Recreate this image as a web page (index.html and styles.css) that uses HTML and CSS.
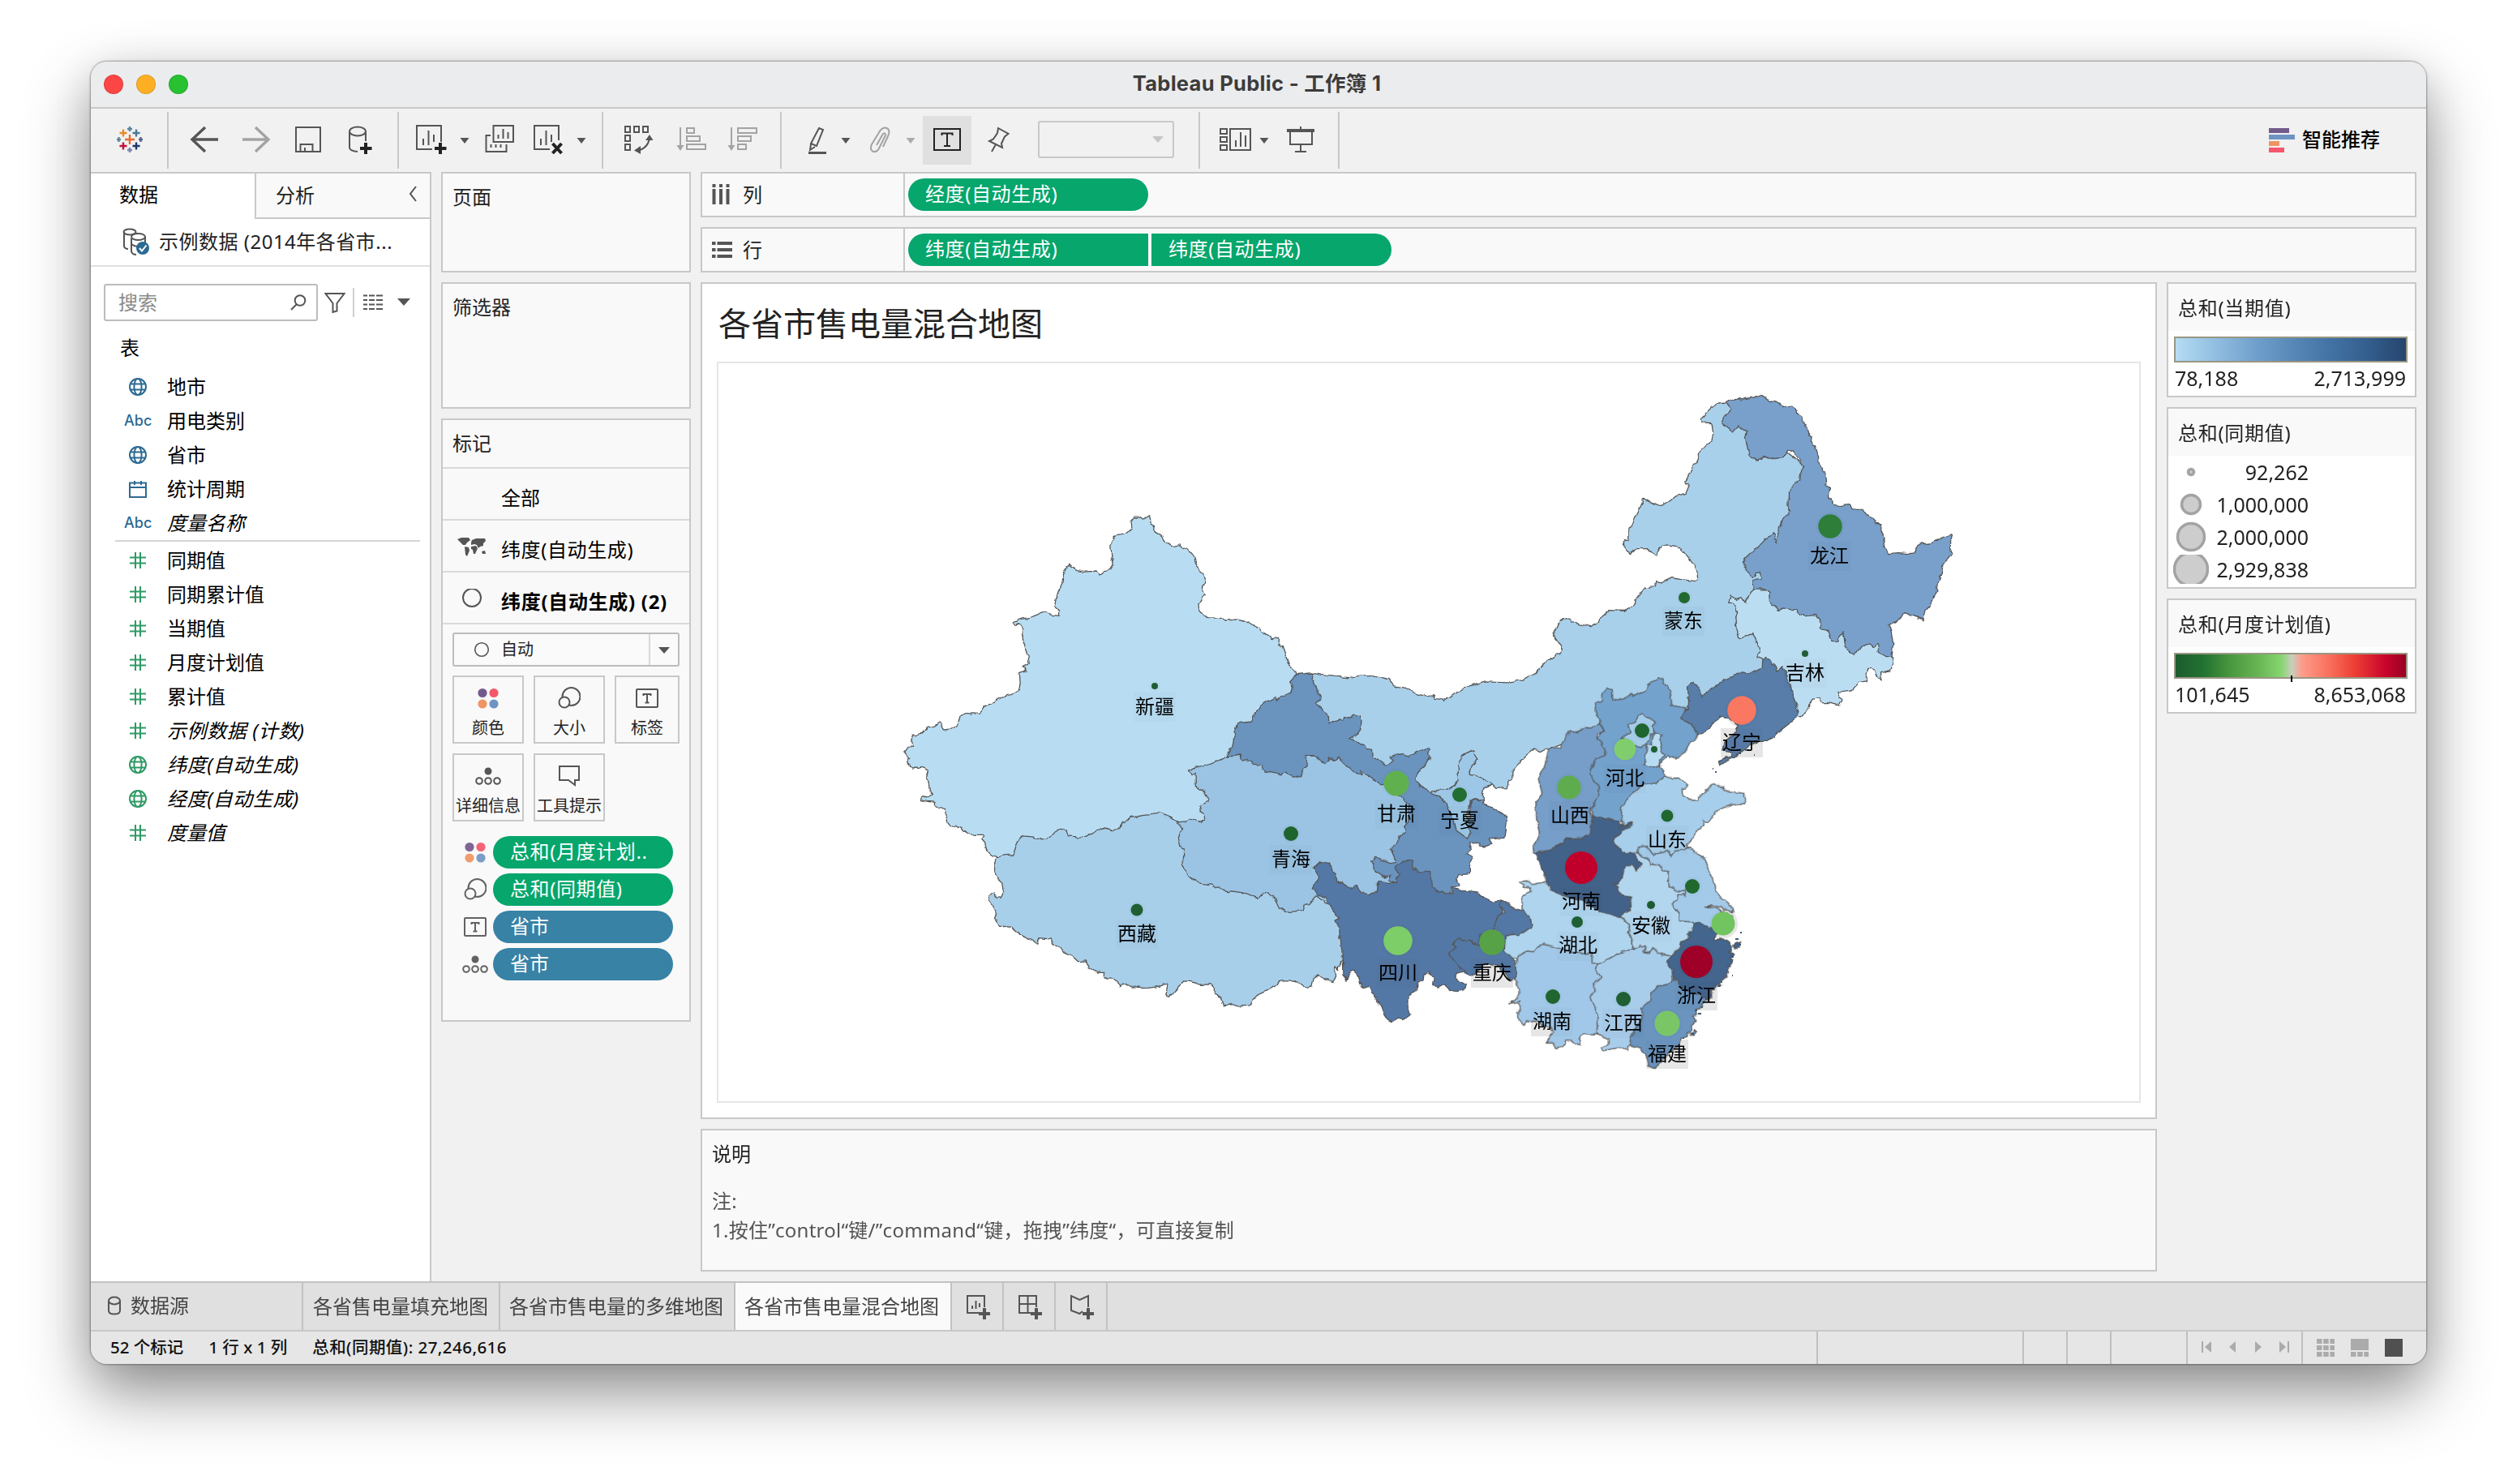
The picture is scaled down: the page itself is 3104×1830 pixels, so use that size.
FILE: index.html
```html
<!DOCTYPE html>
<html lang="zh-CN">
<head>
<meta charset="utf-8">
<title>Tableau Public - 工作簿 1</title>
<link rel="stylesheet" href="styles.css">
</head>
<body>
<svg class="defs" width="0" height="0">
  <defs>
    <symbol id="globe" viewBox="0 0 24 24"><circle cx="12" cy="12" r="10"/><ellipse cx="12" cy="12" rx="4.6" ry="10"/><path d="M3 8.5H21M3 15.5H21"/></symbol>
    <symbol id="hash" viewBox="0 0 24 24"><path d="M9 2V22M15 2V22M2 8.5H22M2 15.5H22"/></symbol>
    <symbol id="cal" viewBox="0 0 24 24"><path d="M2 4.5H22V22H2ZM2 10H22M8 2V7M16 2V7"/></symbol>
    <symbol id="dots" viewBox="0 0 28 28"><g stroke="none"><circle cx="7" cy="7.500" r="5.600" fill="#735a8c"/><circle cx="21" cy="7.500" r="5.600" fill="#f5566c"/><circle cx="7" cy="21" r="5.600" fill="#ee9563"/><circle cx="21" cy="21" r="5.600" fill="#6f94c2"/></g></symbol>
    <symbol id="size" viewBox="0 0 28 28"><circle cx="16.500" cy="12" r="11"/><circle cx="8" cy="19" r="6.500" fill="#f9f9f9"/></symbol>
    <symbol id="label" viewBox="0 0 28 28"><rect x="1" y="3" width="26" height="22" rx="1"/><path d="M9.500 11V9H18.500V11M14 9V19.500M11.500 19.500H16.500"/></symbol>
    <symbol id="detail" viewBox="0 0 32 28"><circle cx="16" cy="8" r="4.500" fill="#555" stroke="none"/><circle cx="5" cy="20" r="3.800"/><circle cx="16" cy="20" r="3.800"/><circle cx="27" cy="20" r="3.800"/></symbol>
    <symbol id="tip" viewBox="0 0 28 28"><path d="M2 2H26V19H21V25L13 19H2Z"/></symbol>
    <filter id="coast" x="-2%" y="-2%" width="104%" height="104%" color-interpolation-filters="sRGB">
      <feTurbulence type="fractalNoise" baseFrequency="0.11" numOctaves="2" seed="4" result="n"/>
      <feDisplacementMap in="SourceGraphic" in2="n" scale="6" xChannelSelector="R" yChannelSelector="G"/>
    </filter>
    <path id="labelboxes" d="M1398 854h52v36h-52zM1376 1134h52v36h-52zM1566 1042h52v36h-52zM1696 986h52v36h-52zM1774 994h52v36h-52zM1698 1182h52v36h-52zM1814 1182h52v36h-52zM1910 988h52v36h-52zM1924 1094h52v36h-52zM1920 1149h52v36h-52zM1888 1242h52v36h-52zM1976 1244h52v36h-52zM2030 1282h52v36h-52zM2066 1210h52v36h-52zM2010 1124h52v36h-52zM2030 1018h52v36h-52zM1978 942h52v36h-52zM2122 898h52v36h-52zM2200 812h52v36h-52zM2230 668h52v36h-52zM2050 748h52v36h-52z"/>
  </defs>
</svg>
<div class="window">
  <header class="titlebar">
    <div class="lights"><i class="red"></i><i class="amber"></i><i class="green"></i></div>
    <div class="title">Tableau Public - 工作簿 1</div>
  </header>

  <div class="toolbar">
    <svg width="94" height="78" viewBox="112 134 94 78"><g stroke-width="2.400"><path stroke="#eb6a2d" d="M154 172H166M160 166V178"/><path stroke="#5b879b" d="M157 159H163M160 156V162M144 172H149M146.500 169V175"/><path stroke="#e8892b" d="M147.500 164H156.500M152 159.500V168.500"/><path stroke="#4a7a94" d="M163.500 164H172.500M168 159.500V168.500"/><path stroke="#5b6591" d="M171 172H176M173.500 169V175"/><path stroke="#c0143c" d="M147.500 180H156.500M152 175.500V184.500"/><path stroke="#1f3472" d="M163.500 180H172.500M168 175.500V184.500"/><path stroke="#7b86b2" d="M157 185H163M160 182V188"/></g></svg>
    <b class="sep"></b>
    <svg width="76" height="78" viewBox="208 134 76 78"><path stroke-width="3.400" d="M269 172H237M253 157L237 172L253 187"/></svg>
    <svg width="66" height="78" viewBox="284 134 66 78"><path stroke="#a3a3a3" stroke-width="3.400" d="M299 172H331M315 157L331 172L315 187"/></svg>
    <svg width="64" height="78" viewBox="350 134 64 78"><path d="M365 157H395V187H365ZM370.500 187V178H385.500V187M376 187V182"/></svg>
    <svg width="76" height="78" viewBox="414 134 76 78"><ellipse cx="441" cy="162" rx="10" ry="5.500"/><path d="M431 162V182Q431 186 441 187M451 162V174"/><path stroke="#222" stroke-width="4" d="M451 176V190M444 183H458.500"/></svg>
    <b class="sep"></b>
    <svg width="66" height="78" viewBox="492 134 66 78"><path d="M533 184H514V155H544V175M522 179V171M528.500 179V161M535 175V166"/><path stroke="#222" stroke-width="4" d="M543 176V190M536 183H550.500"/></svg>
    <svg width="30" height="78" viewBox="558 134 30 78"><path class="solid" d="M567.500 170H578.500L573 177Z"/></svg>
    <svg width="58" height="78" viewBox="588 134 58 78"><path d="M608.500 155H633V175H608.500ZM605 167H599.500V187H624.500V178M614.500 171V166M620.500 171V159M626.500 171V163M605.500 182V178M611.500 182V178M617.500 182V178"/></svg>
    <svg width="58" height="78" viewBox="646 134 58 78"><path d="M678 184H659V155H689V173M667 179V171M673.500 179V161M680 175V166"/><path stroke="#222" stroke-width="4" d="M681.500 177L692.500 189M692.500 177L681.500 189"/></svg>
    <svg width="38" height="78" viewBox="704 134 38 78"><path class="solid" d="M711.500 170H722.500L717 177Z"/></svg>
    <b class="sep"></b>
    <svg width="76" height="78" viewBox="744 134 76 78"><path d="M771 156H777V163H771ZM782 156H788V163H782ZM793 156H799V163H793ZM771 167H777V174H771ZM771 178H777V185H771ZM784 186Q799 184 801 170"/><path class="solid" d="M796 173H805.500L801 166ZM790 180V190L782 185.500Z"/></svg>
    <svg width="64" height="78" viewBox="820 134 64 78"><g stroke="#a3a3a3"><path d="M839 157V181M847 158H856V164H847ZM847 168H863V174H847ZM847 178H870V184H847Z"/><path fill="#a3a3a3" stroke="none" d="M834.500 179H843.500L839 186Z"/></g></svg>
    <svg width="78" height="78" viewBox="884 134 78 78"><g stroke="#a3a3a3"><path d="M902 157V181M910 158H933V164H910ZM910 168H926V174H910ZM910 178H920V184H910Z"/><path fill="#a3a3a3" stroke="none" d="M897.500 179H906.500L902 186Z"/></g></svg>
    <b class="sep"></b>
    <svg width="64" height="78" viewBox="964 134 64 78"><path d="M1010 158L1015 160L1007 180L1000 177ZM1000 178L999 185L1005 181"/><path stroke-width="3" d="M997 188.500H1019"/></svg>
    <svg width="34" height="78" viewBox="1028 134 34 78"><path class="solid" d="M1037.500 170H1048.500L1043 177Z"/></svg>
    <svg width="46" height="78" viewBox="1062 134 46 78"><path stroke="#a3a3a3" d="M1089 181L1095 168Q1099 159 1092 157.500Q1087 157 1083 165L1075 178Q1072 185 1077 187Q1082 188 1085 181L1092 167Q1092 163 1089 165L1081 179"/></svg>
    <svg width="30" height="78" viewBox="1108 134 30 78"><path fill="#aaa" stroke="none" d="M1117.500 170H1128.500L1123 177Z"/></svg>
    <svg class="active" width="60" height="60" viewBox="1138 142 60 60"><path stroke="#222" d="M1152 158H1184V184H1152ZM1161.500 166V163.500H1174.500V166M1168 163.500V179M1164 179H1172"/></svg>
    <svg width="82" height="78" viewBox="1198 134 82 78"><path d="M1231 158L1243.500 165L1239 168.500L1235 177L1236 182L1220 174L1225 171.500L1230 164ZM1228 178L1223 187"/></svg>
    <div class="combo"><svg width="16" height="10" viewBox="0 0 16 10"><path fill="#c6c6c6" stroke="none" d="M1 1H15L8 9Z"/></svg></div>
    <b class="sep"></b>
    <svg width="70" height="78" viewBox="1480 134 70 78"><path d="M1505 159H1513V165H1505ZM1505 169H1513V175H1505ZM1505 179H1513V185H1505ZM1517 159H1542V185H1517ZM1524 181V173M1530 181V163M1536 181V167"/></svg>
    <svg width="24" height="78" viewBox="1550 134 24 78"><path class="solid" d="M1553.500 170H1564.500L1559 177Z"/></svg>
    <svg width="76" height="78" viewBox="1574 134 76 78"><path d="M1604 156V160M1591 162V178H1618V162M1604 178V186M1597 187H1611"/><path stroke-width="4" d="M1587 161H1621"/></svg>
    <b class="sep"></b>
    <div class="showme"><svg width="32" height="32" viewBox="0 0 32 32"><path stroke="none" fill="#735a8c" d="M0 1H25V7H0Z"/><path stroke="none" fill="#6f94c2" d="M0 9H32V15H0Z"/><path stroke="none" fill="#ee9563" d="M0 17H13V23H0Z"/><path stroke="none" fill="#f5566c" d="M0 25H19V31H0Z"/></svg><span>智能推荐</span></div>
  </div>

  <div class="main">
    <aside class="data">
      <div class="tabs"><div class="tab on">数据</div><div class="tab">分析<svg width="14" height="22" viewBox="0 0 14 22"><path d="M11 2L4 11L11 20"/></svg></div></div>
      <div class="source"><svg width="34" height="34" viewBox="151 281 34 34"><ellipse cx="160" cy="286" rx="7.500" ry="3.500"/><path d="M153 286V304Q154 307 158 307M168 287V288M162 294V310Q163 314 168 314M162 301Q167 305 172 304"/><ellipse cx="170.500" cy="292" rx="8.500" ry="4" fill="#fff"/><path d="M179 292V299"/><circle cx="176" cy="306" r="8" fill="#2c6a92" stroke="none"/><path stroke="#fff" d="M172 306L175 309.500L180.500 302.500"/></svg>示例数据 (2014年各省市...</div>
      <div class="find">
        <div class="search"><span>搜索</span><svg width="22" height="22" viewBox="0 0 22 22"><circle cx="13" cy="8.500" r="6.300"/><path d="M9 13L2 20"/></svg></div>
        <svg width="26" height="28" viewBox="0 0 26 28"><path d="M1.500 3H24.500L15.500 15V24.500L10.500 26V15Z"/></svg>
        <b></b>
        <svg width="24" height="22" viewBox="0 0 24 22"><path d="M0 2.500H5M7 2.500H14M16 2.500H24M0 8H5M7 8H14M16 8H24M0 13.500H5M7 13.500H14M16 13.500H24M0 19H5M7 19H14M16 19H24"/></svg>
        <svg class="car" width="16" height="10" viewBox="0 0 16 10"><path class="solid" d="M0 0H16L8 9Z"/></svg>
      </div>
      <div class="th">表</div>
      <ul class="fields dim">
        <li><svg><use href="#globe"/></svg>地市</li>
        <li><em>Abc</em>用电类别</li>
        <li><svg><use href="#globe"/></svg>省市</li>
        <li><svg><use href="#cal"/></svg>统计周期</li>
        <li><em>Abc</em><i>度量名称</i></li>
      </ul>
      <ul class="fields mea">
        <li><svg><use href="#hash"/></svg>同期值</li>
        <li><svg><use href="#hash"/></svg>同期累计值</li>
        <li><svg><use href="#hash"/></svg>当期值</li>
        <li><svg><use href="#hash"/></svg>月度计划值</li>
        <li><svg><use href="#hash"/></svg>累计值</li>
        <li><svg><use href="#hash"/></svg><i class="wide">示例数据 (计数)</i></li>
        <li><svg><use href="#globe"/></svg><i class="wide">纬度(自动生成)</i></li>
        <li><svg><use href="#globe"/></svg><i class="wide">经度(自动生成)</i></li>
        <li><svg><use href="#hash"/></svg><i>度量值</i></li>
      </ul>
    </aside>

    <section class="cards">
      <div class="panel pages">页面</div>
      <div class="panel filters">筛选器</div>
      <div class="panel marks">
        <div class="mh">标记</div>
        <div class="layer"><span></span>全部</div>
        <div class="layer wide"><span><svg width="36" height="28" viewBox="0 0 36 28"><path class="solid" d="M0 3L5 1L14 1L16 4L12 7L10 10L7 10L4 7ZM9 12L14 13L15 17L12 24L10 22ZM18 4L23 2L34 2L35 5L32 8L32 11L28 12L26 14L24 10L21 9L17 10L17 7ZM17 12L23 11L25 14L22 21L20 21L19 16L17 15ZM30 18L34 17L35 21L31 21Z"/></svg></span>纬度(自动生成)</div>
        <div class="layer bold wide"><span><svg width="36" height="28" viewBox="0 0 36 28"><circle cx="18" cy="11" r="11"/></svg></span>纬度(自动生成) (2)</div>
        <div class="type"><svg width="20" height="20" viewBox="0 0 20 20"><circle cx="10" cy="10" r="8.300" stroke-width="1.600"/></svg><span>自动</span><div><svg width="14" height="8" viewBox="0 0 14 8"><path class="solid" d="M0 0H14L7 8Z"/></svg></div></div>
        <div class="btns">
          <div><svg><use href="#dots"/></svg>颜色</div>
          <div><svg><use href="#size"/></svg>大小</div>
          <div><svg><use href="#label"/></svg>标签</div>
          <div><svg class="w"><use href="#detail"/></svg>详细信息</div>
          <div><svg><use href="#tip"/></svg>工具提示</div>
        </div>
        <div class="pills">
          <div><span><svg><use href="#dots"/></svg></span><p class="pill">总和(月度计划..</p></div>
          <div><span><svg><use href="#size"/></svg></span><p class="pill">总和(同期值)</p></div>
          <div><span><svg><use href="#label"/></svg></span><p class="pill blue">省市</p></div>
          <div><span><svg class="w"><use href="#detail"/></svg></span><p class="pill blue">省市</p></div>
        </div>
      </div>
    </section>

    <section class="work">
      <div class="panel shelf"><div class="sh"><svg width="22" height="26" viewBox="0 0 22 26"><path stroke-width="4" d="M2.500 0V4M11 0V4M19.500 0V4M2.500 6V25M11 6V25M19.500 6V25"/></svg>列</div><p class="pill">经度(自动生成)</p></div>
      <div class="panel shelf"><div class="sh"><svg class="rows" width="25" height="22" viewBox="0 0 25 22"><path stroke-width="4" d="M0 3H4.500M6.500 3H25M0 11H4.500M6.500 11H25M0 19H4.500M6.500 19H25"/></svg>行</div><p class="pill first">纬度(自动生成)</p><p class="pill last">纬度(自动生成)</p></div>
      <div class="lower">
        <div class="center">
          <div class="panel sheet">
            <h1>各省市售电量混合地图</h1>
            <svg class="map" width="1752" height="910" viewBox="886 448 1752 910">
              <g fill="#ebebeb" stroke="none"><use href="#labelboxes"/><circle cx="2125" cy="1139" r="18.500"/><circle cx="2148" cy="876" r="21"/><circle cx="2092" cy="1186" r="24"/></g>
              <g class="prov" filter="url(#coast)">
                <path transform="translate(1900 470) scale(.3444 .3333)" fill="#a8d0ea" d="M-825 1080L-765 1090L-687 1097L-639 1088L-600 1088L-547 1102L-526 1127L-484 1135L-445 1158L-416 1164L-379 1160L-377 1174L-347 1180L-310 1158L-252 1128L-198 1110L-111 1113L-73 1107L-19 1083L24 1030L73 1005L77 992L45 940L65 890L80 878L105 880L130 897L180 908L235 860L240 848L305 850L340 822L345 800L375 763L410 762L415 742L430 747L470 728L500 733L552 740L565 730L563 710L552 685L525 650L490 612L455 606L435 610L410 642L380 620L340 620L320 638L298 610L297 595L313 588L313 560L328 525L370 433L400 452L435 463L485 425L520 415L532 385L518 380L530 345L555 300L575 252L613 222L618 195L612 155L575 153L573 138L625 83L665 78L720 120L960 330L1000 700L900 900L850 1100L560 1220L500 1250L300 1250L200 1280L100 1330L29 1360L15 1355L0 1373L-29 1365L-48 1380L-77 1410L-102 1445L-102 1475L-116 1478L-118 1505L-160 1507L-174 1493L-261 1530L-397 1580L-455 1530L-542 1460L-620 1410L-697 1350L-784 1330L-852 1130Z"/>
                <g transform="translate(1100 600) scale(.3954 .4464)">
                  <path fill="#b8ddf3" d="M803 80L807 100L817 113L816 123L840 137L852 153L873 165L895 161L908 176L923 172L940 190L948 212L957 230L970 240L976 265L968 285L975 300L956 325L957 340L968 356L985 362L1030 364L1040 370L1075 367L1107 373L1145 392L1150 400L1185 418L1208 418L1206 435L1217 440L1235 485L1259 508L1262 520L1300 540L1300 700L1200 900L979 925L838 950L378 1020L330 1026L315 1018L295 1005L290 985L280 975L285 962L265 962L240 960L215 945L200 937L185 941L170 925L175 910L165 890L143 885L130 872L112 870L92 866L95 857L110 860L128 850L117 840L115 820L108 800L113 785L95 775L75 773L65 780L55 775L50 760L55 750L40 732L50 720L65 715L60 700L65 688L88 684L110 668L112 660L130 664L150 652L158 670L190 667L205 660L213 635L225 626L270 628L290 605L310 600L350 578L380 570L395 562L400 545L398 515L418 507L408 498L428 490L425 470L410 430L405 400L407 392L395 378L388 383L380 374L405 366L435 360L480 346L495 355L523 357L522 345L507 330L515 300L530 268L535 245L550 218L580 232L600 236L635 233L650 242L665 232L683 230L691 210L685 195L682 155L695 135L735 128L748 115L746 95L755 83L775 83L785 90Z"/>
                  <path fill="#a8cfea" d="M330 1026L340 1020L378 1017L390 985L410 965L440 968L470 974L490 970L505 958L515 948L543 950L550 965L585 968L610 965L640 950L665 943L690 950L710 942L715 930L735 919L750 914L780 909L838 903L870 915L890 922L900 930L1315 1050L1450 1150L1460 1310L1403 1310L1393 1332L1382 1325L1385 1355L1375 1368L1360 1362L1345 1362L1330 1350L1315 1360L1310 1380L1298 1388L1270 1370L1240 1364L1215 1364L1195 1380L1170 1393L1148 1400L1125 1420L1110 1432L1080 1434L1060 1428L1035 1436L1028 1408L1005 1400L1005 1385L995 1375L960 1376L935 1368L910 1366L890 1385L863 1412L857 1403L862 1375L845 1378L825 1382L795 1386L765 1385L740 1378L720 1376L710 1382L703 1368L690 1358L660 1357L662 1343L640 1342L615 1328L605 1310L580 1312L560 1295L535 1285L525 1272L500 1265L497 1250L462 1247L450 1267L440 1255L400 1238L375 1218L355 1213L335 1213L320 1195L325 1180L318 1165L305 1150L302 1130L320 1122L325 1135L340 1136L348 1120L343 1095L322 1070L318 1042Z"/>
                  <path fill="#9bc4e4" d="M1046 748L965 772L945 776L925 785L932 797L946 793L947 828L975 845L990 868L960 882L962 898L975 905L979 922L970 929L940 922L925 917L915 927L890 930L905 942L893 970L900 995L912 1000L912 1025L902 1045L925 1075L955 1095L1000 1100L1035 1115L1095 1122L1140 1135L1168 1122L1195 1138L1210 1165L1248 1177L1280 1172L1285 1157L1305 1155L1318 1130L1400 1170L1593 1130L1593 1060L1635 926L1619 821L1467 746L1214 739L1087 731Z"/>
                </g>
                <g transform="translate(1480 780) scale(.3333)">
                  <path fill="#6a93be" d="M100 460L120 420L128 370L140 335L190 330L200 300L235 262L275 240L287 252L300 238L335 222L340 205L332 180L355 155L408 150L447 245L433 263L455 292L478 308L480 337L500 325L515 320L530 327L533 313L560 315L565 307L590 307L597 325L595 358L575 383L552 395L575 400L605 415L615 430L638 433L640 465L655 467L690 493L700 492L715 475L702 460L738 447L775 460L800 440L830 430L843 433L850 465L835 490L803 515L798 545L820 570L850 593L880 600L930 640L960 690L1000 680L1003 618L1045 618L1047 633L1080 645L1105 662L1130 675L1135 700L1128 760L1070 765L1080 782L1055 792L1035 790L1025 778L995 780L1000 800L985 818L1005 830L995 855L998 893L955 897L950 912L960 935L930 945L930 965L880 980L800 930L720 925L695 915L705 895L685 905L650 885L632 845L645 832L705 855L722 850L720 835L705 800L730 780L735 755L760 742L755 715L770 700L772 640L740 605L680 562L665 563L635 535L595 513L597 530L560 510L510 460L498 472L480 465L463 485L430 462L415 452L393 452L397 490L375 512L372 530L345 535L315 518L300 525L265 515L238 518L230 490L195 487L190 475L155 470L150 453L105 460Z"/>
                  <path fill="#9dc7e6" d="M850 593L880 583L915 580L945 568L955 545L955 490L970 458L1005 437L1015 440L1015 455L1025 470L1008 490L997 523L1040 537L1080 562L1050 575L1045 600L1045 618L1003 618L998 650L985 670L990 700L1000 735L990 763L965 745L945 730L935 690L915 640L905 625L880 605Z"/>
                  <path fill="#5478a5" d="M420 870L445 847L482 855L490 885L505 900L510 920L560 950L575 935L595 958L625 970L655 960L660 917L690 925L725 925L725 905L740 895L722 865L755 850L770 838L785 850L785 870L810 885L845 887L860 915L862 945L885 963L935 962L935 943L975 955L1030 960L1040 975L1085 997L1115 993L1120 1100L1000 1200L990 1265L950 1255L942 1275L950 1290L985 1300L980 1320L940 1327L920 1322L910 1300L875 1312L860 1300L865 1275L850 1258L828 1262L825 1287L805 1300L800 1325L768 1350L768 1380L777 1415L755 1430L730 1425L710 1442L695 1437L675 1405L670 1385L650 1355L625 1310L605 1318L590 1290L585 1270L563 1247L550 1262L543 1288L528 1270L525 1180L515 1100L498 1065L513 1058L485 1020L470 985L435 970L418 950L425 925L440 905Z"/>
                </g>
                <g transform="translate(1900 470) scale(.3444 .3333)">
                  <path fill="#78a0cb" d="M665 78L710 62L720 66L765 60L770 53L795 56L825 75L840 78L870 98L880 92L900 97L918 110L920 125L940 135L940 155L955 175L960 195L970 205L968 225L980 240L988 265L993 290L1000 315L1018 345L1022 385L1035 395L1032 430L1050 457L1075 460L1105 458L1125 475L1155 475L1175 500L1200 527L1222 527L1218 550L1232 580L1225 600L1245 638L1280 635L1320 638L1340 635L1345 615L1370 602L1400 600L1430 583L1450 573L1474 570L1463 610L1474 635L1460 658L1440 675L1438 700L1425 740L1420 775L1405 800L1395 830L1378 850L1370 883L1300 857L1285 883L1245 898L1255 930L1262 970L1257 1023L1150 1030L1000 970L850 880L780 790L762 770L757 740L790 730L785 708L770 710L765 727L755 727L745 705L720 670L775 615L832 560L845 600L850 560L870 505L885 498L888 470L890 410L905 385L925 365L928 350L940 315L905 262L885 253L870 280L835 288L800 280L775 292L748 280L733 210L738 190L705 165L685 187L645 152L680 103Z"/>
                  <path fill="#bbddf2" d="M762 772L808 770L818 785L820 815L848 845L870 840L905 848L917 842L920 855L945 870L985 865L1003 885L1003 918L1030 922L1045 965L1065 965L1068 945L1083 930L1090 970L1110 1005L1125 1015L1140 990L1175 975L1190 985L1205 972L1212 1000L1235 1018L1262 1022L1260 1045L1250 1070L1215 1080L1220 1110L1200 1085L1195 1065L1175 1063L1165 1110L1140 1115L1115 1143L1065 1150L1080 1180L1070 1200L1030 1190L1005 1190L995 1167L970 1180L965 1205L930 1242L918 1240L850 1150L820 1060L795 1030L775 1020L785 1005L775 965L760 932L740 940L715 952L700 915L697 880L708 860L690 820L672 820L680 795L700 805L720 800L735 822L745 790Z"/>
                  <path fill="#587da9" d="M803 1020L840 1050L845 1075L868 1052L878 1090L900 1135L905 1170L915 1195L923 1220L915 1248L880 1275L850 1300L820 1330L785 1330L740 1352L700 1385L660 1405L640 1418L637 1405L660 1395L685 1385L680 1370L650 1365L655 1340L690 1310L710 1275L680 1250L640 1242L600 1290L562 1312L545 1275L500 1245L500 1238L527 1210L530 1190L527 1130L540 1115L560 1125L577 1170L600 1140L640 1120L660 1105L690 1092L695 1083L720 1080L745 1083L765 1072L793 1060L795 1035Z"/>
                </g>
                <g transform="translate(1840 780) scale(.3333 .3571)">
                  <path fill="#73a2cd" d="M385 245L405 235L402 215L425 192L445 197L447 232L470 235L515 210L525 217L550 205L570 205L575 180L610 165L615 155L630 157L637 175L650 190L660 205L665 252L720 260L700 295L745 325L760 358L730 385L715 415L680 437L675 432L650 425L620 450L620 470L640 493L600 530L560 560L500 650L455 650L400 637L370 630L350 500L385 365L412 343L400 310L385 285Z"/>
                  <path fill="#a5cdea" d="M553 278L570 292L605 307L595 325L600 345L585 357L575 380L550 400L535 395L510 375L480 365L490 355L515 345L505 318L530 310L540 290Z"/>
                  <path fill="#b8ddf3" d="M605 345L627 352L620 370L627 410L635 425L620 440L618 460L600 467L565 458L568 430L575 405L568 390L590 385L595 360Z"/>
                  <path fill="#769ec8" d="M400 312L412 343L390 350L388 365L420 400L420 425L385 435L365 470L360 490L397 535L395 560L370 605L360 620L370 640L365 690L325 712L268 713L265 728L195 755L155 762L152 740L175 690L165 650L162 590L185 555L170 500L195 460L210 400L235 397L250 400L262 375L290 338L315 343L345 328L365 330Z"/>
                  <path fill="#aed4ee" d="M105 862L125 857L150 870L205 858L240 880L400 950L475 985L510 1010L505 1040L520 1060L522 1110L455 1150L385 1160L300 1150L100 1140L92 1125L30 1110L0 1055L45 1045L100 1040L145 1020L140 990L108 960L108 925L115 905L145 895L140 885L115 882L118 870Z"/>
                  <path fill="#a7ceea" d="M640 493L670 503L695 502L725 530L703 540L705 562L730 578L760 575L790 545L820 525L845 530L870 547L935 555L935 590L915 597L895 590L870 600L835 613L820 635L795 655L780 648L785 665L755 690L740 710L720 735L725 742L710 770L540 770L485 758L465 740L445 725L455 705L480 690L522 652L480 670L485 650L475 625L480 605L515 560L560 525L605 522Z"/>
                  <path fill="#436289" d="M372 632L400 637L430 648L455 650L470 648L480 665L472 675L522 652L520 660L480 690L455 705L445 725L465 740L485 758L528 765L535 780L555 795L553 808L530 822L518 805L493 805L488 835L465 868L465 880L475 905L510 910L512 960L485 970L475 985L425 970L390 960L330 925L250 905L220 890L200 860L198 830L175 800L160 762L195 755L265 728L268 713L325 712L365 690Z"/>
                  <path fill="#a3cae9" d="M540 757L542 740L575 738L580 752L600 765L650 755L660 775L675 755L710 750L725 742L785 780L800 820L825 870L830 900L860 925L885 945L892 968L850 950L820 942L790 945L830 950L890 980L880 1010L835 1040L770 1010L690 1000L650 880L600 820Z"/>
                  <path fill="#b3d6ef" d="M528 765L540 758L560 775L580 785L585 800L620 803L630 822L650 825L655 880L690 893L715 895L718 905L685 905L685 925L667 940L690 970L690 995L740 1000L745 1005L735 1030L725 1040L728 1058L695 1065L700 1085L655 1118L610 1110L600 1100L522 1110L520 1060L505 1040L510 1010L475 985L485 970L512 960L510 910L475 905L465 880L452 868L465 868L488 835L493 805L518 805L530 822L553 808L555 795L535 780Z"/>
                  <path fill="#a8cdea" d="M390 1145L430 1128L480 1100L520 1095L545 1080L565 1085L560 1105L575 1108L600 1090L610 1103L655 1118L680 1160L680 1215L600 1260L530 1400L505 1425L505 1443L480 1435L445 1440L415 1447L405 1435L430 1420L430 1405L390 1390L360 1250Z"/>
                  <path fill="#a2c8e9" d="M92 1125L105 1110L130 1100L155 1102L175 1080L195 1077L250 1090L300 1105L330 1110L370 1105L370 1140L390 1145L385 1170L402 1195L375 1215L378 1240L365 1255L378 1290L390 1320L388 1388L360 1390L340 1387L325 1395L325 1420L310 1420L290 1407L270 1407L265 1428L235 1437L225 1415L200 1415L225 1380L220 1365L160 1345L125 1340L120 1357L95 1330L95 1310L105 1300L100 1275L65 1280L95 1260L100 1240L88 1200L90 1150Z"/>
                  <path fill="#43658e" d="M745 1005L770 1003L800 1020L835 1025L828 1045L820 1060L850 1058L870 1070L890 1085L885 1100L872 1104L895 1108L882 1125L896 1132L880 1150L870 1152L875 1170L866 1190L845 1205L850 1216L835 1212L820 1235L808 1238L810 1262L780 1275L740 1270L690 1220L670 1200L665 1160L645 1140L660 1118L700 1085L695 1065L728 1058L725 1040L735 1030ZM893 1078L905 1068L915 1072L920 1064L915 1085L900 1090Z"/>
                  <path fill="#6b94bf" d="M670 1200L690 1200L692 1225L730 1240L795 1262L775 1290L768 1300L755 1300L760 1318L745 1328L750 1345L738 1355L740 1370L725 1380L722 1395L700 1400L690 1430L655 1450L625 1485L600 1505L580 1497L575 1465L550 1435L510 1425L512 1400L555 1330L550 1300L585 1270L585 1250L615 1220L650 1215ZM730 1382L740 1386L752 1368L760 1378L748 1394L735 1392Z"/>
                </g>
                <path fill="#5478a5" transform="translate(1480 780) scale(.3333)" d="M1115 993L1170 1025L1195 1035L1222 1050L1228 1090L1195 1110L1180 1122L1155 1115L1130 1125L1125 1180L1145 1190L1165 1215L1170 1250L1168 1280L1150 1290L1130 1265L1100 1230L1060 1225L1040 1235L1020 1265L990 1265L960 1240L945 1220L920 1190L945 1162L935 1150L950 1130L970 1140L1000 1138L1010 1150L1030 1155L1035 1120L1085 1100L1100 1050L1125 1035L1110 1005Z"/>
              </g>
              <path class="specks" d="M2115 952h2M2112 948h1M2145 929h2M2152 925h4M2163 931h1M2146 1150h2M2140 1158h4M2144 1165h3M2136 1203h1M2134 1180h4M2118 1216h3M2122 1211h2M2090 1246h3M2094 1250h4M2098 1242h2M2086 1275h3M2075 1280h2"/>
              <g class="bub">
                <circle cx="1424" cy="846" r="4" fill="#1f5c33"/><circle cx="1402" cy="1122" r="7.500" fill="#1f5f33"/><circle cx="1592" cy="1028" r="9" fill="#1f632f"/><circle cx="1722" cy="966" r="15.500" fill="#61b050"/><circle cx="1800" cy="980" r="9" fill="#216d32"/><circle cx="1724" cy="1160" r="17.800" fill="#7dcd69"/><circle cx="1840" cy="1162" r="15.800" fill="#57a247"/><circle cx="1935" cy="971" r="14.500" fill="#5eac4d"/><circle cx="1950" cy="1070" r="20" fill="#c0002b"/><circle cx="1945" cy="1137" r="7" fill="#1f5f33"/><circle cx="1915" cy="1229" r="9" fill="#20652f"/><circle cx="2002" cy="1232" r="9" fill="#1f5f33"/><circle cx="2056" cy="1262" r="15.500" fill="#7ac667"/><circle cx="2092" cy="1186" r="20" fill="#9e0027"/><circle cx="2125" cy="1139" r="14.500" fill="#72c460"/><circle cx="2087" cy="1093" r="9" fill="#21682f"/><circle cx="2036" cy="1116" r="5" fill="#1f5c33"/><circle cx="2056" cy="1006" r="7.500" fill="#20672f"/><circle cx="2004" cy="924" r="13.300" fill="#80cd6d"/><circle cx="2025" cy="901" r="9" fill="#1f652f"/><circle cx="2040" cy="924" r="4" fill="#1f5f33"/><circle cx="2148" cy="876" r="17.700" fill="#fa7761"/><circle cx="2226" cy="806" r="4" fill="#1f5c33"/><circle cx="2257" cy="649" r="14.700" fill="#2e7d39"/><circle cx="2077" cy="737" r="7" fill="#20692f"/>
              </g>
              <g class="lbg"><use href="#labelboxes"/></g>
              <g class="lab">
                <text x="1424" y="880">新疆</text><text x="1402" y="1160">西藏</text><text x="1592" y="1068">青海</text><text x="1722" y="1012">甘肃</text><text x="1800" y="1020">宁夏</text><text x="1724" y="1208">四川</text><text x="1840" y="1208">重庆</text><text x="1936" y="1014">山西</text><text x="1950" y="1120">河南</text><text x="1946" y="1174">湖北</text><text x="1914" y="1268">湖南</text><text x="2002" y="1270">江西</text><text x="2056" y="1308">福建</text><text x="2092" y="1236">浙江</text><text x="2036" y="1150">安徽</text><text x="2056" y="1044">山东</text><text x="2004" y="968">河北</text><text x="2148" y="924">辽宁</text><text x="2226" y="838">吉林</text><text x="2256" y="694">龙江</text><text x="2076" y="774">蒙东</text>
              </g>
            </svg>
          </div>
          <div class="panel caption"><h2>说明</h2><p>注:<br>1.按住”control“键/”command“键，拖拽”纬度“，可直接复制</p></div>
        </div>
        <div class="legends">
          <div class="panel lg"><h3>总和(当期值)</h3><div class="bar blues"></div><div class="ends"><span>78,188</span><span>2,713,999</span></div></div>
          <div class="panel lg sizes"><h3>总和(同期值)</h3>
            <div><svg viewBox="0 0 44 40"><circle cx="22" cy="20" r="3.500"/></svg><span>92,262</span></div>
            <div><svg viewBox="0 0 44 40"><circle cx="22" cy="20" r="11.500"/></svg><span>1,000,000</span></div>
            <div><svg viewBox="0 0 44 40"><circle cx="22" cy="20" r="16.500"/></svg><span>2,000,000</span></div>
            <div><svg viewBox="0 2 44 36"><circle cx="22" cy="20" r="20.500"/></svg><span>2,929,838</span></div>
          </div>
          <div class="panel lg"><h3>总和(月度计划值)</h3><div class="bar div"></div><div class="ends"><span>101,645</span><span>8,653,068</span></div></div>
        </div>
      </div>
    </section>
  </div>

  <nav class="sheets">
    <div class="ds"><svg width="18" height="24" viewBox="0 0 18 24"><ellipse cx="9" cy="6" rx="7" ry="4.500"/><path d="M2 6V18Q2 22.500 9 22.500T16 18V6"/></svg>数据源</div>
    <div class="s1">各省售电量填充地图</div><div class="s2">各省市售电量的多维地图</div><div class="s3">各省市售电量混合地图</div>
    <div class="nw"><svg width="32" height="32" viewBox="0 0 32 32"><path d="M17 23H2V2H23V16M8 18V14M12.500 18V8M17 16V11"/><path stroke-width="4" d="M23 17V31M16 24H30"/></svg></div>
    <div class="nw"><svg width="32" height="32" viewBox="0 0 32 32"><path d="M17 23H2V2H23V16M2 12H23M12.500 2V23"/><path stroke-width="4" d="M23 17V31M16 24H30"/></svg></div>
    <div class="nw"><svg width="32" height="32" viewBox="0 0 32 32"><path d="M16 21L12.500 24L2 20V2L12.500 7L23 2V16"/><path stroke-width="4" d="M23 17V31M16 24H30"/></svg></div>
  </nav>
  <footer class="status">
    <div class="st1"><span>52 个标记</span><span>1 行 x 1 列</span><span class="sum">总和(同期值): 27,246,616</span></div>
    <div class="c1"></div><div class="c2"></div><div class="c2"></div><div class="c3"></div>
    <div class="nav"><svg width="142" height="40" viewBox="2697 1642 142 40"><path fill="#ababab" stroke="none" d="M2714 1654H2716V1668H2714ZM2726 1654V1668L2718 1661ZM2756 1654V1668L2748 1661ZM2780 1654V1668L2788 1661ZM2810 1654V1668L2818 1661ZM2820 1654H2822V1668H2820Z"/></svg></div>
    <svg width="150" height="40" viewBox="2840 1642 150 40"><path stroke="#ababab" stroke-width="6" stroke-dasharray="6.500 1.700" d="M2857 1654H2879M2857 1662H2879M2857 1670H2879M2899 1670H2921"/><path stroke="none" fill="#ababab" d="M2899 1651H2921V1665H2899Z"/><path stroke="none" fill="#505050" d="M2941 1651H2963V1673H2941Z"/></svg>
  </footer>
</div>
</body>
</html>
```
FILE: styles.css
```css
* { box-sizing: border-box; margin: 0; padding: 0; }
body { width: 3104px; height: 1830px; padding: 76px 0 0 112px; background: #fff; overflow: hidden; font: 24px/36px "Noto Sans", "Noto Sans CJK SC", sans-serif; color: #222; }
svg { display: block; flex: none; fill: none; stroke: #555; stroke-width: 2; }
.defs { position: absolute; }
.solid { fill: #555; stroke: none; }
ul { list-style: none; }
.wide { letter-spacing: .6px; }
.window { width: 2880px; height: 1606px; border-radius: 20px; overflow: hidden; background: #f1f1f1; display: flex; flex-direction: column; box-shadow: 0 0 2px 1px rgba(0,0,0,.35), 0 36px 80px rgba(0,0,0,.42), 0 10px 50px rgba(0,0,0,.1); }

.titlebar { height: 58px; flex: none; background: #ebecee; border-bottom: 2px solid #c9c9c9; display: flex; align-items: center; }
.lights { display: flex; gap: 16px; padding-left: 16px; width: 120px; }
.lights i { width: 24px; height: 24px; border-radius: 50%; border: 1px solid rgba(0,0,0,.12); }
.red { background: #fc4645; }
.amber { background: #fdaf24; }
.green { background: #28c131; }
.title { flex: 1; text-align: center; padding: 0 124px 3px 0; font: 700 25.500px/50px "Inter", "Noto Sans CJK SC", sans-serif; letter-spacing: .3px; color: #3c3c3c; }

.toolbar { height: 78px; flex: none; display: flex; align-items: center; }
.toolbar .sep { width: 2px; height: 70px; background: #c8c8c8; flex: none; }
.toolbar .active { background: #e0e0e0; }
.combo { width: 168px; height: 46px; margin: 0 30px 2px 0; border: 2px solid #c8c8c8; border-radius: 3px; display: flex; align-items: center; justify-content: flex-end; padding-right: 10px; }
.showme { margin-left: auto; padding-right: 57px; display: flex; align-items: center; gap: 9px; font-weight: 500; color: #000; }
.showme span { padding-bottom: 2px; }

.main { height: 1368px; flex: none; display: flex; }
.data { width: 420px; background: #fff; border-right: 2px solid #c8c8c8; border-top: 2px solid #c8c8c8; margin-right: 12px; }
.tabs { display: flex; height: 56px; }
.tab { height: 56px; line-height: 51px; }
.tab.on { width: 202px; padding-left: 35px; color: #000; }
.tab:not(.on) { flex: 1; background: #f9f9f9; border-left: 2px solid #c8c8c8; border-bottom: 2px solid #c8c8c8; padding: 0 14px 2px 24px; display: flex; justify-content: space-between; align-items: center; }
.tab svg { margin-bottom: 2px; }
.source { height: 59px; border-bottom: 2px solid #e0e0e0; display: flex; align-items: center; gap: 11px; padding: 0 0 2px 39px; white-space: nowrap; letter-spacing: .5px; }
.find { display: flex; align-items: center; padding: 21px 0 0 16px; }
.search { width: 264px; height: 46px; border: 2px solid #bcbcbc; border-radius: 3px; display: flex; align-items: center; justify-content: space-between; padding: 0 11px 0 16px; color: #8a8a8a; margin-right: 8px; }
.find b { width: 2px; height: 36px; background: #cfcfcf; margin: 0 11px 0 9px; }
.find .car { margin-left: 18px; }
.th { padding: 15px 0 0 36px; height: 60px; color: #000; }
.fields li { height: 42px; display: flex; align-items: center; color: #000; padding-left: 46px; }
.fields svg { width: 24px; height: 24px; margin-right: 24px; }
.fields em { width: 33px; margin: 0 20px 0 -5px; font: 500 18px/36px "Inter", sans-serif; }
.dim { border-bottom: 2px solid #d5d5d5; margin: 0 12px 2px 30px; }
.dim li { padding-left: 16px; }
.dim svg { stroke: #2c6a92; }
.dim em { color: #2c6a92; }
.mea svg { stroke: #2f9a66; }

.panel { border: 2px solid #c8c8c8; background: #f9f9f9; }
.cards { width: 308px; margin-right: 12px; }
.pages { height: 124px; padding: 11px 12px; margin-bottom: 12px; }
.filters { height: 156px; padding: 11px 12px; margin-bottom: 12px; }
.marks { height: 744px; }
.mh { height: 60px; line-height: 58px; padding-left: 12px; border-bottom: 2px solid #d9d9d9; }
.layer { height: 64px; border-bottom: 2px solid #d9d9d9; display: flex; align-items: center; padding-top: 9px; color: #000; white-space: nowrap; }
.layer span { width: 54px; padding-left: 18px; margin-right: 18px; flex: none; height: 32px; }
.bold { font-weight: 700; }
.bold.wide { letter-spacing: .7px; }
.type { margin: 10px 12px 11px; height: 42px; border: 2px solid #bcbcbc; border-radius: 3px; display: flex; align-items: center; padding-left: 24px; font-size: 20px; background: #fafafa; }
.type span { flex: 1; padding-left: 14px; }
.type div { width: 36px; height: 38px; border-left: 2px solid #d9d9d9; padding: 16px 0 0 10px; }
.btns { display: grid; grid-template-columns: 88px 88px 80px; gap: 12px; padding-left: 12px; }
.btns div { height: 84px; border: 2px solid #c8c8c8; display: flex; flex-direction: column; align-items: center; font-size: 20px; line-height: 28px; padding-top: 12px; white-space: nowrap; }
.btns svg, .pills svg { width: 28px; height: 28px; margin-bottom: 9px; }
.btns svg.w, .pills svg.w { width: 32px; }
.pills { padding: 18px 0 0 18px; display: grid; gap: 6px; }
.pills div { display: flex; align-items: center; }
.pills span { width: 44px; display: flex; justify-content: center; opacity: .92; }
.pills svg { margin: 0; }
.pill { height: 40px; line-height: 38px; border-radius: 20px; background: #06a66c; color: #fff; padding-left: 21px; white-space: nowrap; letter-spacing: .6px; }
.pills .pill { width: 222px; }
.pill.blue { background: #3882a5; letter-spacing: 0; }

.work { flex: 1; margin-right: 12px; }
.shelf { height: 56px; margin-bottom: 12px; display: flex; align-items: center; }
.sh { width: 250px; height: 52px; border-right: 2px solid #c8c8c8; display: flex; align-items: center; padding-left: 12px; gap: 16px; margin-right: 4px; }
.sh .rows { margin-right: -3px; }
.shelf .pill { width: 296px; }
.pill.first { border-radius: 20px 0 0 20px; margin-right: 4px; }
.pill.last { border-radius: 0 20px 20px 0; }
.lower { display: flex; gap: 12px; }
.center { width: 1796px; }
.sheet { height: 1032px; background: #fff; padding: 19px 0 0 18px; margin-bottom: 12px; }
h1 { font-size: 40px; line-height: 60px; height: 77px; font-weight: 400; padding-left: 2px; }
.map { border: 2px solid #e6e6e6; width: 1756px; height: 914px; }
.prov { stroke: #555; stroke-width: 1.300; stroke-linejoin: round; }
.prov path { vector-effect: non-scaling-stroke; }
.specks { stroke: #3d5877; stroke-width: 2; }
.bub { stroke: rgba(0,0,0,.02); stroke-width: 6; paint-order: stroke; }
.lbg { fill: rgba(0,0,0,.018); stroke: none; }
.lab { fill: #000; stroke: none; text-anchor: middle; font-size: 24px; }
.caption { height: 176px; padding: 11px 12px; }
h2 { font-size: 24px; font-weight: 400; line-height: 36px; margin-bottom: 22px; }
.caption p { color: #555; letter-spacing: .25px; }

.legends { width: 308px; display: grid; gap: 12px; align-content: start; }
.lg { background: #fff; height: 142px; font-size: 25px; }
h3 { font-size: 24px; font-weight: 400; height: 58px; line-height: 59px; padding-left: 12px; background: #f9f9f9; letter-spacing: .7px; }
.bar { height: 32px; margin: 7px 9px 0 7px; border: 2px solid #999683; }
.blues { background: linear-gradient(90deg, #b9ddf1 0, #b0d8f2 2%, #9ac5e5 13%, #6f9fcb 35%, #5686b5 52%, #4273a5 67%, #35608f 82%, #26456e); }
.div { background: linear-gradient(90deg, #1d5b2e, #227232 12%, #4a983e 24%, #69b555 36%, #87d671 46%, #c9cdbd 50.500%, #fd9b8b 55%, #f86f5a 67%, #ec3d33 78%, #c9052c 91%, #980025); position: relative; }
.div::after { content: ""; position: absolute; left: 142px; top: 26px; width: 2px; height: 8px; background: #000; }
.ends { display: flex; justify-content: space-between; padding: 1px 11px 0 8px; }
.sizes { height: 224px; }
.sizes div { height: 40px; display: flex; align-items: center; padding-left: 6px; }
.sizes div svg { width: 44px; height: 40px; fill: #cdcdcd; stroke: #a3a3a3; stroke-width: 3.500; }
.sizes div:last-child svg { height: 36px; }
.sizes span { width: 123px; text-align: right; }

.sheets { height: 62px; flex: none; background: #e0e0e0; border-top: 2px solid #c2c2c2; border-bottom: 2px solid #c8c8c8; display: flex; line-height: 58px; color: #444; white-space: nowrap; }
.sheets div { border-right: 2px solid #c2c2c2; height: 58px; }
.ds { width: 262px; padding: 0 0 2px 20px; display: flex; align-items: center; gap: 11px; }
.s1 { width: 243px; padding-left: 12px; }
.s2 { width: 290px; padding-left: 11px; }
.s3 { width: 267px; padding-left: 11px; background: #fafafa; }
.nw { width: 64px; padding: 14px 0 0 17px; }
.status { flex: 1; background: #e6e6e6; display: flex; font-size: 20.500px; line-height: 39px; color: #111; font-weight: 500; }
.status div { border-right: 2px solid #c0c0c0; height: 40px; }
.st1 { width: 2130px; padding-left: 24px; display: flex; gap: 31px; white-space: nowrap; }
.sum { letter-spacing: .45px; }
.c1 { width: 254px; }
.c2 { width: 54px; }
.c3 { width: 94px; }
.nav { width: 142px; overflow: hidden; }
```
